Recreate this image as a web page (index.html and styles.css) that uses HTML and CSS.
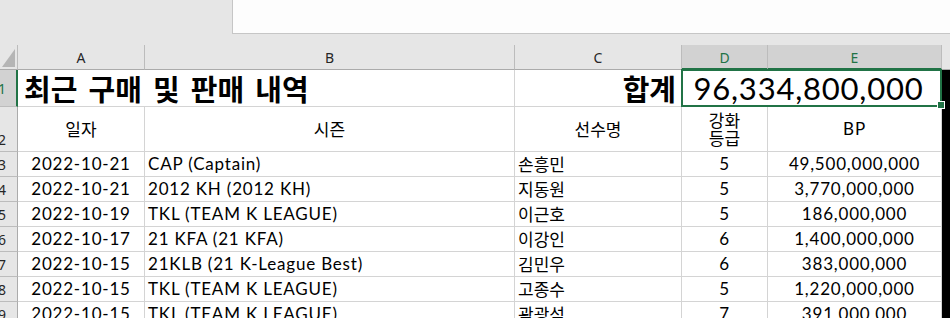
FILE: index.html
```html
<!DOCTYPE html>
<html lang="ko">
<head>
<meta charset="utf-8">
<title>최근 구매 및 판매 내역</title>
<link rel="stylesheet" href="styles.css">
</head>
<body>
<div class="top">
  <div class="top-left"></div>
  <div class="formula"></div>
</div>
<div class="strip"></div>
<div class="sheet">
  <div class="corner"><svg width="18" height="25" viewBox="0 0 18 25"><polygon points="15,4 15,22 2,22" fill="#b5b5b5"/></svg></div>
  <div class="ch">A</div>
  <div class="ch">B</div>
  <div class="ch">C</div>
  <div class="ch sel">D</div>
  <div class="ch sel">E</div>
  <div class="ch-fill"></div>

  <div class="rh rh-sel"><span>1</span></div>
  <div class="c title span2">최근 구매 및 판매 내역</div>
  <div class="c total-label">합계</div>
  <div class="c total span2">96,334,800,000<span class="handle"></span></div>
  <div class="edge"></div>

  <div class="rh rh-low"><span>2</span></div>
  <div class="c hd ko">일자</div>
  <div class="c hd ko">시즌</div>
  <div class="c hd ko">선수명</div>
  <div class="c hd ko two"><span>강화</span><span>등급</span></div>
  <div class="c hd">BP</div>
  <div class="edge"></div>

  <div class="rh"><span>3</span></div>
  <div class="c mid">2022-10-21</div>
  <div class="c left">CAP (Captain)</div>
  <div class="c left ko">손흥민</div>
  <div class="c mid">5</div>
  <div class="c mid">49,500,000,000</div>
  <div class="edge"></div>

  <div class="rh"><span>4</span></div>
  <div class="c mid">2022-10-21</div>
  <div class="c left">2012 KH (2012 KH)</div>
  <div class="c left ko">지동원</div>
  <div class="c mid">5</div>
  <div class="c mid">3,770,000,000</div>
  <div class="edge"></div>

  <div class="rh"><span>5</span></div>
  <div class="c mid">2022-10-19</div>
  <div class="c left">TKL (TEAM K LEAGUE)</div>
  <div class="c left ko">이근호</div>
  <div class="c mid">5</div>
  <div class="c mid">186,000,000</div>
  <div class="edge"></div>

  <div class="rh"><span>6</span></div>
  <div class="c mid">2022-10-17</div>
  <div class="c left">21 KFA (21 KFA)</div>
  <div class="c left ko">이강인</div>
  <div class="c mid">6</div>
  <div class="c mid">1,400,000,000</div>
  <div class="edge"></div>

  <div class="rh"><span>7</span></div>
  <div class="c mid">2022-10-15</div>
  <div class="c left">21KLB (21 K-League Best)</div>
  <div class="c left ko">김민우</div>
  <div class="c mid">6</div>
  <div class="c mid">383,000,000</div>
  <div class="edge"></div>

  <div class="rh"><span>8</span></div>
  <div class="c mid">2022-10-15</div>
  <div class="c left">TKL (TEAM K LEAGUE)</div>
  <div class="c left ko">고종수</div>
  <div class="c mid">5</div>
  <div class="c mid">1,220,000,000</div>
  <div class="edge"></div>

  <div class="rh"><span>9</span></div>
  <div class="c mid">2022-10-15</div>
  <div class="c left">TKL (TEAM K LEAGUE)</div>
  <div class="c left ko">곽광석</div>
  <div class="c mid">7</div>
  <div class="c mid">391,000,000</div>
  <div class="edge"></div>
</div>
</body>
</html>
```

FILE: styles.css
```css
html, body {
  margin: 0;
  padding: 0;
  width: 950px;
  height: 318px;
  overflow: hidden;
  background: #e6e6e6;
  font-family: Lato, "Noto Sans CJK KR", sans-serif;
  color: #000;
}

.top {
  display: flex;
  height: 34px;
}
.top-left {
  width: 232px;
  background: #e6e6e6;
}
.formula {
  flex: 1;
  background: #fdfdfd;
  border-left: 1px solid #c6c6c6;
  border-bottom: 1px solid #c6c6c6;
}
.strip {
  height: 11px;
  background: #e6e6e6;
}

.sheet {
  display: grid;
  grid-template-columns: 18px 127px 370px 167px 86px 174px 8px;
  grid-template-rows: 25px 37px 45px repeat(7, 25px);
  background: #fff;
}

.corner {
  background: #e6e6e6;
  border-right: 1px solid #bcbcbc;
  border-bottom: 1px solid #ababab;
  box-sizing: border-box;
}
.corner svg { display: block; }

.ch {
  box-sizing: border-box;
  background: #e6e6e6;
  border-right: 1px solid #bcbcbc;
  border-bottom: 1px solid #ababab;
  display: flex;
  align-items: center;
  justify-content: center;
  font-family: "Noto Sans", sans-serif;
  font-size: 14px;
  color: #262626;
  padding-top: 1px;
}
.ch.sel {
  background: #d2d2d2;
  color: #217346;
  border-bottom: 2px solid #217346;
}
.ch-fill {
  background: #e6e6e6;
  border-bottom: 1px solid #ababab;
}

.rh {
  box-sizing: border-box;
  background: #e6e6e6;
  border-right: 1px solid #ababab;
  border-bottom: 1px solid #bcbcbc;
  display: flex;
  align-items: center;
  justify-content: flex-end;
  padding-right: 11px;
  overflow: hidden;
  font-family: "Noto Sans", sans-serif;
  font-size: 14px;
  color: #262626;
}
.rh-sel {
  background: #d2d2d2;
  color: #217346;
  border-right: 2px solid #217346;
  padding-right: 10px;
}
.rh-low {
  align-items: flex-end;
  padding-bottom: 2px;
}

.c {
  box-sizing: border-box;
  border-right: 1px solid #d4d4d4;
  border-bottom: 1px solid #d4d4d4;
  display: flex;
  align-items: center;
  font-size: 17px;
  letter-spacing: 0.8px;
  line-height: 1.1;
  white-space: nowrap;
  overflow: hidden;
  padding-top: 1px;
}
.span2 { grid-column: span 2; }

.title {
  font-family: "Noto Sans CJK KR", sans-serif;
  font-weight: 700;
  font-size: 29px;
  line-height: 1;
  letter-spacing: 0;
  word-spacing: 3px;
  padding-left: 6px;
  overflow: visible;
}
.total-label {
  font-family: "Noto Sans CJK KR", sans-serif;
  font-weight: 700;
  font-size: 29px;
  line-height: 1;
  letter-spacing: 0;
  justify-content: flex-end;
  padding-right: 5px;
  overflow: visible;
}
.total {
  position: relative;
  overflow: visible;
  justify-content: center;
  font-size: 31px;
  line-height: 1;
  letter-spacing: 0.8px;
  padding-right: 6px;
}
.total::after {
  content: "";
  position: absolute;
  left: -1px;
  top: -1px;
  right: -1px;
  bottom: -1px;
  border: 2px solid #217346;
}
.handle {
  position: absolute;
  right: -4px;
  bottom: -3px;
  width: 6px;
  height: 6px;
  background: #217346;
  border: 1px solid #fff;
  z-index: 2;
}

.hd {
  justify-content: center;
  text-align: center;
}
.ko {
  font-family: "Noto Sans CJK KR", sans-serif;
  font-size: 17px;
  letter-spacing: 0;
}
.two {
  flex-direction: column;
  line-height: 18px;
  padding-top: 0;
}
.mid { justify-content: center; }
.left { padding-left: 3px; }

.edge {
  background: #000;
}
```
